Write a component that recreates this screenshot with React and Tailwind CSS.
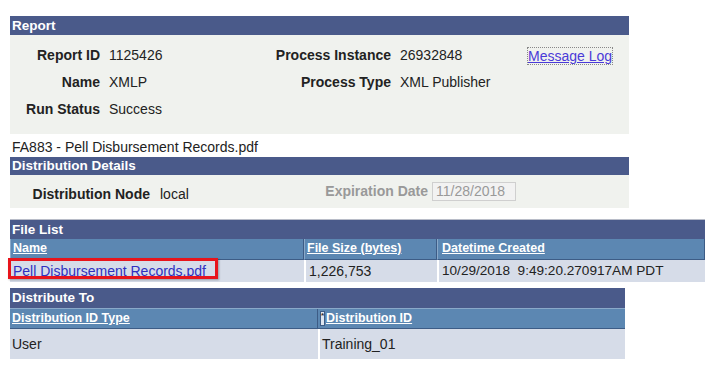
export default function App() {
  const labelCls = 'text-right font-bold text-[14px] text-[#222] whitespace-nowrap';
  const valueCls = 'text-[14px] text-[#222] whitespace-nowrap';

  return (
    <div className="relative w-[716px] h-[378px] bg-white font-['Liberation_Sans',Arial,sans-serif] text-[#222] overflow-hidden">
      {/* Report */}
      <div className="ml-[10px] mt-[16px] w-[619px]">
        <div className="h-[19px] bg-[#4a5a8a] px-[2px] text-[13.5px] font-bold text-white leading-[19px]">Report</div>
        <div className="h-[99px] bg-[#f0f2ee] pt-[7px]">
          <div className="flex h-[27px] items-center">
            <div className={`w-[90px] ${labelCls}`}>Report ID</div>
            <div className={`ml-[9px] w-[141px] ${valueCls}`}>1125426</div>
            <div className={`w-[141px] ${labelCls}`}>Process Instance</div>
            <div className={`ml-[9px] w-[128px] ${valueCls}`}>26932848</div>
            <a href="#" className="text-[14px] leading-[16px] text-[#4a3ad8] underline outline-1 outline-dotted outline-[#888]">Message Log</a>
          </div>
          <div className="flex h-[27px] items-center">
            <div className={`w-[90px] ${labelCls}`}>Name</div>
            <div className={`ml-[9px] w-[141px] ${valueCls}`}>XMLP</div>
            <div className={`w-[141px] ${labelCls}`}>Process Type</div>
            <div className={`ml-[9px] w-[128px] ${valueCls}`}>XML Publisher</div>
          </div>
          <div className="flex h-[27px] items-center">
            <div className={`w-[90px] ${labelCls}`}>Run Status</div>
            <div className={`ml-[9px] w-[141px] ${valueCls}`}>Success</div>
          </div>
        </div>
      </div>

      {/* Distribution details */}
      <div className="ml-[12px] mt-[5px] text-[14px] leading-[16px]">FA883 - Pell Disbursement Records.pdf</div>
      <div className="ml-[10px] mt-[2px] w-[619px]">
        <div className="h-[18px] bg-[#4a5a8a] px-[2px] text-[13.5px] font-bold text-white leading-[18px]">Distribution Details</div>
        <div className="flex h-[33px] items-center bg-[#f0f2ee]">
          <div className={`ml-[21px] mt-[6px] w-[119px] ${labelCls}`}>Distribution Node</div>
          <div className={`ml-[10px] mt-[6px] w-[120px] ${valueCls}`}>local</div>
          <div className="w-[148px] whitespace-nowrap text-right font-bold text-[14px] text-[#999]">Expiration Date</div>
          <div className="ml-[4px] h-[19px] w-[84px] border border-[#cfcfcf] bg-[#f2f2f2] px-[3px] text-[14px] leading-[17px] text-[#999]">11/28/2018</div>
        </div>
      </div>

      {/* File list */}
      <div className="ml-[10px] mt-[11px] w-[695px] border-t border-[#b8bcc8]">
        <div className="h-[19px] bg-[#4a5a8a] px-[2px] text-[13.5px] font-bold text-white leading-[19px]">File List</div>
        <div className="flex h-[21px] bg-[#5c87b2] text-[12.5px] font-bold text-white leading-[19px]">
          <div className="w-[294px] border-r border-[#3d5c86] border-b border-b-[#3d5c86] px-[2px] underline border-l border-l-[#8aa9c9]">Name</div>
          <div className="w-[133px] border-r border-[#3d5c86] border-b border-b-[#3d5c86] px-[2px] underline border-l border-l-[#8aa9c9]">File Size (bytes)</div>
          <div className="flex-1 border-r border-[#3d5c86] border-b border-b-[#3d5c86] px-[4px] underline border-l border-l-[#8aa9c9]">Datetime Created</div>
        </div>
        <div className="flex h-[22px] bg-[#d6dce8] text-[14px] leading-[22px]">
          <div className="w-[294px] px-[3px]">
            <a href="#" className="text-[#3030c0] underline">Pell Disbursement Records.pdf</a>
          </div>
          <div className="w-[133px] border-l-2 border-white px-[3px]">1,226,753</div>
          <div className="flex-1 whitespace-pre border-l-2 border-white px-[3px] text-[13.6px]">10/29/2018  9:49:20.270917AM PDT</div>
        </div>
      </div>

      {/* Distribute to */}
      <div className="ml-[10px] mt-[6px] w-[615px]">
        <div className="h-[20px] bg-[#4a5a8a] px-[2px] text-[13.5px] font-bold text-white leading-[20px]">Distribute To</div>
        <div className="flex h-[21px] bg-[#5c87b2] text-[12.5px] font-bold text-white leading-[19px] border-t border-[#8aa9c9]">
          <div className="w-[308px] border-r border-[#3d5c86] border-b border-b-[#3d5c86] px-[2px] underline">Distribution ID Type</div>
          <div className="flex flex-1 items-center border-b border-b-[#3d5c86] px-[2px]">
            <span className="mr-[1px] flex h-[15px] w-[5px] items-start justify-center border border-[#3d5c86] bg-[#dfe6f0] text-[8px] leading-[8px] text-[#333]">*</span>
            <span className="underline">Distribution ID</span>
          </div>
        </div>
        <div className="flex h-[30px] items-center bg-[#d6dce8] text-[14px]">
          <div className="w-[308px] px-[2px]">User</div>
          <div className="flex h-full flex-1 items-center border-l-2 border-white px-[2px]">Training_01</div>
        </div>
      </div>

      {/* highlight box */}
      <div className="absolute left-[8px] top-[258px] h-[21px] w-[210px] border-[3px] border-[#e8141b] shadow-[1px_1px_2px_rgba(0,0,0,0.3)]" />
    </div>
  );
}
